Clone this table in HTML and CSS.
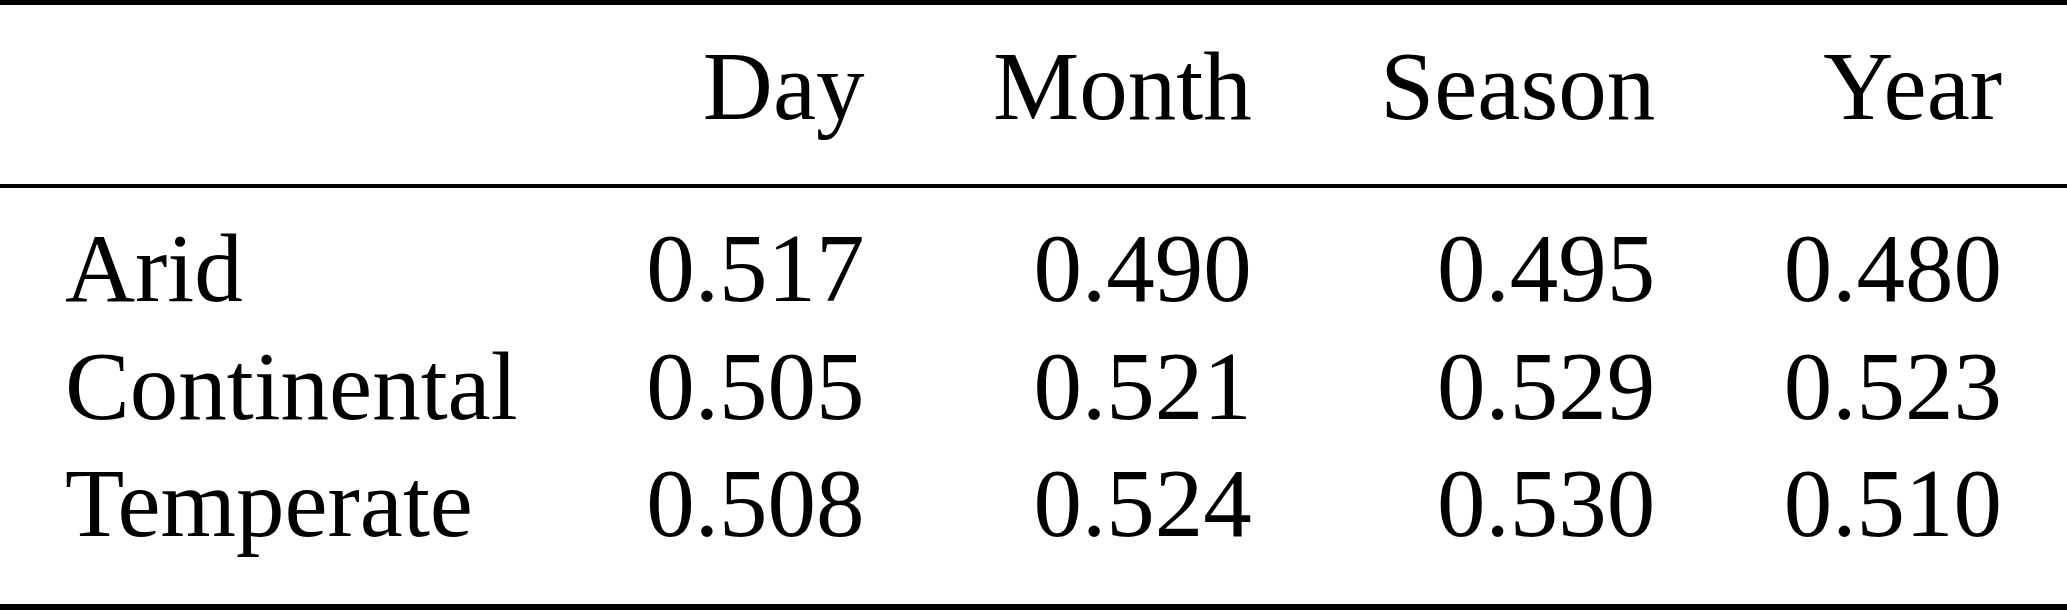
FILE: index.html
```html
<!DOCTYPE html>
<html lang="en">
<head>
    <meta charset="UTF-8">
    <title>Climate table</title>
    <link rel="stylesheet" href="styles.css">
</head>
<body>
    <div class="table">
        <div class="rule rule-top"></div>

        <div class="cell"></div>
        <div class="cell num">Day</div>
        <div class="cell num">Month</div>
        <div class="cell num">Season</div>
        <div class="cell num">Year</div>

        <div class="rule rule-mid"></div>

        <div class="cell">Arid</div>
        <div class="cell num">0.517</div>
        <div class="cell num">0.490</div>
        <div class="cell num">0.495</div>
        <div class="cell num">0.480</div>

        <div class="cell">Continental</div>
        <div class="cell num">0.505</div>
        <div class="cell num">0.521</div>
        <div class="cell num">0.529</div>
        <div class="cell num">0.523</div>

        <div class="cell">Temperate</div>
        <div class="cell num">0.508</div>
        <div class="cell num">0.524</div>
        <div class="cell num">0.530</div>
        <div class="cell num">0.510</div>

        <div class="rule rule-bottom"></div>
    </div>
</body>
</html>
```

FILE: styles.css
```css
body {
    margin: 0;
    background: #fff;
    color: #000;
}
.table {
    display: grid;
    grid-template-columns: repeat(5, auto);
    justify-content: space-between;
    padding: 0 65px;
    font-family: 'Liberation Serif', 'Times New Roman', serif;
    font-size: 97px;
    line-height: 117.5px;
}
.cell {
    white-space: nowrap;
}
.num {
    text-align: right;
}
.rule {
    grid-column: 1 / -1;
    margin: 0 -65px;
    background: #000;
}
.rule-top {
    height: 5px;
    margin-bottom: 22.5px;
}
.rule-mid {
    height: 4px;
    margin-top: 39px;
    margin-bottom: 22px;
}
.rule-bottom {
    height: 6px;
    margin-top: 41px;
}
```
